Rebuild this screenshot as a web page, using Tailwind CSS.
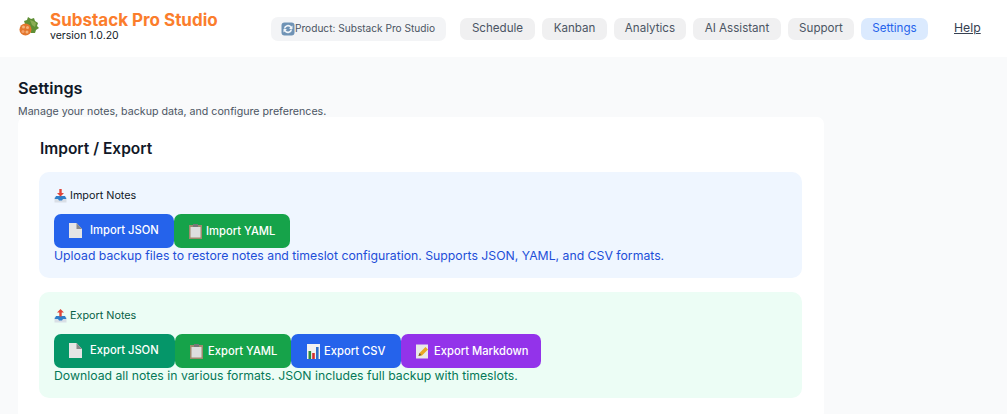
<!DOCTYPE html>
<html lang="en">
<head>
    <meta charset="UTF-8">
    <title>Substack Pro Studio - Settings</title>
    <script src="https://cdn.jsdelivr.net/npm/@tailwindcss/browser@4"></script>
</head>
<body class="h-screen overflow-hidden bg-[#f9fafb] font-['Inter',sans-serif] antialiased">
    <!-- Header -->
    <header class="flex h-[57px] items-center bg-white">
        <div class="flex w-[271px] items-center pl-[19px]">
            <svg class="mb-[3px] h-[20px] w-[20px] shrink-0" viewBox="0 0 20 20">
                <path d="M5 4l3-1 1-3 3 2 3-1 1 3 3 2-1 3 2 2-3 2-1 3-4 0-5-6z" fill="#5f8f35"/>
                <path d="M11 3l3 1 3 2-1 4-3-2z" fill="#8bad55"/>
                <circle cx="6.5" cy="12.5" r="6" fill="#e2762d"/>
                <circle cx="4.5" cy="10" r="1.5" fill="#f4b27a"/>
                <circle cx="8.5" cy="10.5" r="1.5" fill="#f4b27a"/>
                <circle cx="4" cy="14.5" r="1.5" fill="#f4a06a"/>
                <circle cx="8" cy="15" r="1.5" fill="#f4b27a"/>
            </svg>
            <div class="ml-[11px] pb-[5px]">
                <div class="text-[17px] font-bold leading-[20px] text-[#fb7d2c]">Substack Pro Studio</div>
                <div class="text-[10.5px] leading-[12px] text-[#111827]">version 1.0.20</div>
            </div>
        </div>
        <div class="flex h-[24px] w-[175px] items-center rounded-[7px] bg-[#f3f4f6] pl-[10px] text-[10.15px] text-[#4b5563]">
            <svg class="h-[14px] w-[14px] shrink-0" viewBox="0 0 14 14">
                <rect x="0.5" y="0.5" width="13" height="13" rx="3" fill="#6f93b5"/>
                <path d="M2.8 6.5A4.3 4.3 0 0 1 10.5 4.5L11.5 3.5V7H8L9.3 5.7A2.8 2.8 0 0 0 4.3 6.5Z" fill="#f1f5f9"/>
                <path d="M11.2 7.5A4.3 4.3 0 0 1 3.5 9.5L2.5 10.5V7H6L4.7 8.3A2.8 2.8 0 0 0 9.7 7.5Z" fill="#f1f5f9"/>
            </svg>
            <span>Product: Substack Pro Studio</span>
        </div>
        <nav class="ml-[14px] flex items-center gap-[7px] text-[11.6px] text-[#4b5563]">
            <a class="flex h-[22px] w-[75px] items-center justify-center rounded-[7px] bg-[#f0f0f1]">Schedule</a>
            <a class="flex h-[22px] w-[65px] items-center justify-center rounded-[7px] bg-[#f0f0f1]">Kanban</a>
            <a class="flex h-[22px] w-[72px] items-center justify-center rounded-[7px] bg-[#f0f0f1]">Analytics</a>
            <a class="flex h-[22px] w-[88px] items-center justify-center rounded-[7px] bg-[#f0f0f1]">AI Assistant</a>
            <a class="flex h-[22px] w-[66px] items-center justify-center rounded-[7px] bg-[#f0f0f1]">Support</a>
            <a class="flex h-[22px] w-[67px] items-center justify-center rounded-[7px] bg-[#dbeafe] text-[#2563eb]">Settings</a>
            <a class="ml-[19px] text-[12.25px] text-[#374151] underline">Help</a>
        </nav>
    </header>

    <main class="px-[18px]">
        <h1 class="mt-[21px] text-[16.3px] font-semibold leading-[21px] text-[#111827]">Settings</h1>
        <p class="mt-[7px] text-[10.67px] leading-[11px] text-[#4b5563]">Manage your notes, backup data, and configure preferences.</p>

        <div class="w-[806px] rounded-[7px] bg-white pb-[21px] pl-[21px] pt-[21px]">
            <h2 class="pl-[1px] text-[15.5px] font-semibold leading-[21px] text-[#111827]">Import / Export</h2>

            <!-- Import -->
            <section class="mt-[13px] h-[106px] w-[763px] rounded-[10px] bg-[#eff6ff] pl-[15px] pt-[15px]">
                <h3 class="flex h-[18px] items-center text-[10.8px] font-normal text-[#111827]">
                    <svg class="mr-[3px] h-[14px] w-[13px]" viewBox="0 0 13 14">
                        <path d="M0.5 8h12v5.5H.5z" fill="#d9dfe6"/>
                        <path d="M2 7h9l1.5 3H9L8 11.5H5L4 10H.5z" fill="#2f7fc9"/>
                        <path d="M5.3 0h2.4v4H10L6.5 7.5 3 4h2.3z" fill="#e0453a"/>
                    </svg>
                    Import Notes
                </h3>
                <div class="mt-[9px] flex text-[11.2px] font-medium text-white">
                    <a class="flex h-[34px] w-[120px] items-center rounded-[7px] bg-[#2563eb] pb-[1px] pl-[15px]">
                        <svg class="mr-[8px] h-[15px] w-[13px]" viewBox="0 0 13 15"><path d="M0 0h7.5L13 6v9H0z" fill="#e5e5e5"/><path d="M7.5 0v6H13z" fill="#8a8a8a"/></svg>
                        Import JSON
                    </a>
                    <a class="flex h-[34px] w-[116px] items-center rounded-[7px] bg-[#16a34a] pl-[15px]">
                        <svg class="mr-[4px] h-[15px] w-[13px]" viewBox="0 0 13 15"><rect y="1" width="13" height="14" fill="#a08a6e"/><rect x="1.5" y="3" width="10" height="10.5" fill="#dedede"/><rect x="4" width="5" height="3" fill="#777"/></svg>
                        Import YAML
                    </a>
                </div>
                <p class="text-[12.25px] leading-[15px] text-[#1d4ed8]">Upload backup files to restore notes and timeslot configuration. Supports JSON, YAML, and CSV formats.</p>
            </section>

            <!-- Export -->
            <section class="mt-[14px] h-[106px] w-[763px] rounded-[10px] bg-[#ecfdf5] pl-[15px] pt-[15px]">
                <h3 class="flex h-[18px] items-center text-[10.8px] font-normal text-[#065f46]">
                    <svg class="mr-[3px] h-[14px] w-[13px]" viewBox="0 0 13 14">
                        <path d="M0.5 8h12v5.5H.5z" fill="#d9dfe6"/>
                        <path d="M2 7h9l1.5 3H9L8 11.5H5L4 10H.5z" fill="#2f7fc9"/>
                        <path d="M6.5 0L10 3.5H7.7v4H5.3v-4H3z" fill="#e0453a"/>
                    </svg>
                    Export Notes
                </h3>
                <div class="mt-[9px] flex text-[11.2px] font-medium text-white">
                    <a class="flex h-[34px] w-[121px] items-center rounded-[7px] bg-[#059669] pb-[1px] pl-[15px]">
                        <svg class="mr-[8px] h-[15px] w-[13px]" viewBox="0 0 13 15"><path d="M0 0h7.5L13 6v9H0z" fill="#e5e5e5"/><path d="M7.5 0v6H13z" fill="#8a8a8a"/></svg>
                        Export JSON
                    </a>
                    <a class="flex h-[34px] w-[116px] items-center rounded-[7px] bg-[#16a34a] pl-[15px]">
                        <svg class="mr-[5px] h-[15px] w-[13px]" viewBox="0 0 13 15"><rect y="1" width="13" height="14" fill="#a08a6e"/><rect x="1.5" y="3" width="10" height="10.5" fill="#dedede"/><rect x="4" width="5" height="3" fill="#777"/></svg>
                        Export YAML
                    </a>
                    <a class="flex h-[34px] w-[110px] items-center rounded-[7px] bg-[#2563eb] pl-[16px]">
                        <svg class="mr-[4px] h-[15px] w-[13px]" viewBox="0 0 13 15"><rect width="13" height="15" fill="#f1f1f1"/><rect x="1.5" y="7" width="2.6" height="8" fill="#2e8b3d"/><rect x="5.2" y="9" width="2.6" height="6" fill="#d32f2f"/><rect x="9" y="3" width="2.6" height="12" fill="#2f6fc9"/></svg>
                        Export CSV
                    </a>
                    <a class="flex h-[34px] w-[140px] items-center rounded-[7px] bg-[#9333ea] pl-[15px]">
                        <svg class="mr-[5px] h-[15px] w-[13px]" viewBox="0 0 13 15"><rect y="0.5" width="12" height="14" fill="#e8e8e8"/><path d="M2.5 12l1-3 6-6L12 5.5l-6 6z" fill="#e9a825"/><path d="M2.5 12l1-3 2 2z" fill="#6b5a3a"/></svg>
                        Export Markdown
                    </a>
                </div>
                <p class="text-[12.25px] leading-[15px] text-[#047857]">Download all notes in various formats. JSON includes full backup with timeslots.</p>
            </section>
        </div>
    </main>
</body>
</html>
